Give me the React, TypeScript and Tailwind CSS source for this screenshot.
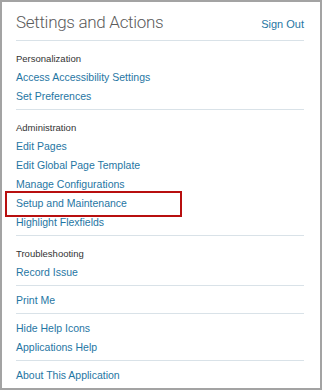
const sections = [
  { title: 'Personalization', items: ['Access Accessibility Settings', 'Set Preferences'] },
  {
    title: 'Administration',
    items: [
      'Edit Pages',
      'Edit Global Page Template',
      'Manage Configurations',
      'Setup and Maintenance',
      'Highlight Flexfields',
    ],
  },
  { title: 'Troubleshooting', items: ['Record Issue'] },
  { title: '', items: ['Print Me'] },
  { title: '', items: ['Hide Help Icons', 'Applications Help'] },
  { title: '', items: ['About This Application'] },
]

const App = () => {
  return (
    <div
      className="h-[392px] w-[324px] bg-white"
      style={{ fontFamily: '"Liberation Sans", Arial, sans-serif' }}
    >
      <div className="h-[390px] w-[322px] border-2 border-[#a3a3a3] bg-white pl-[14px] pr-[16px]">
        {/* header */}
        <div className="flex h-[39px] items-baseline justify-between border-b border-[#d9e2e8] pt-[8px]">
          <h2
            className="text-[17px] font-light tracking-[-0.3px] text-[#5b5b5b]"
            style={{ fontFamily: 'Roboto, "Liberation Sans", sans-serif' }}
          >
            Settings and Actions
          </h2>
          <span className="text-[11px] text-[#1f76a3]">Sign Out</span>
        </div>

        {sections.map((section, i) => (
          <div
            key={i}
            className={`pb-[3px] ${i < sections.length - 1 ? 'border-b border-[#d9e2e8]' : ''} ${
              section.title ? 'pt-[8px]' : 'pt-[5px]'
            }`}
          >
            {section.title && (
              <div className="text-[9.5px] leading-[19px] text-[#333]">{section.title}</div>
            )}
            {section.items.map((item) => (
              <div key={item} className="relative text-[10.5px] leading-[19px] text-[#1f76a3]">
                {item}
                {item === 'Setup and Maintenance' && (
                  <div className="absolute -top-[3px] -left-[11px] h-[26px] w-[177px] border-2 border-[#b80f0f]" />
                )}
              </div>
            ))}
          </div>
        ))}
      </div>
    </div>
  )
}

export default App
